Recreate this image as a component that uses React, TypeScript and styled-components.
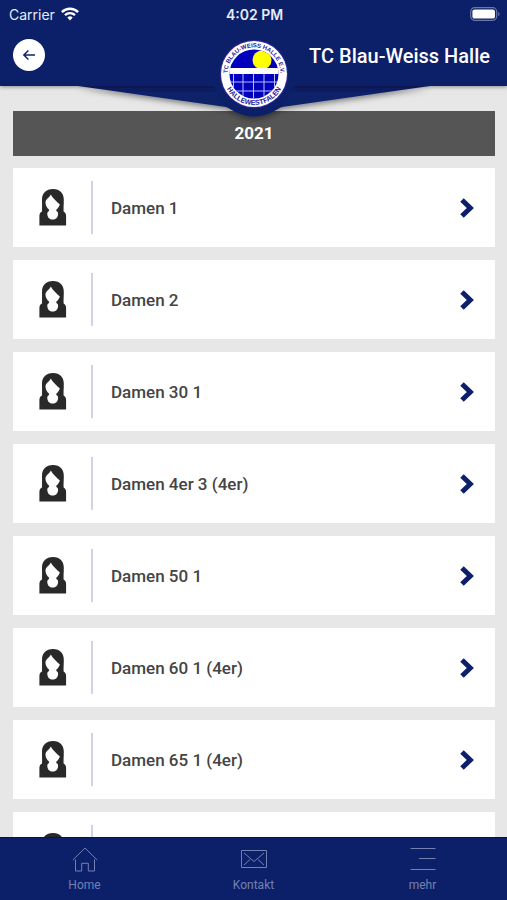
import React from "react";
import styled, { createGlobalStyle } from "styled-components";

const navy = "#0c2069";

const GlobalStyle = createGlobalStyle`
  * { box-sizing: border-box; }
  body { margin: 0; background: #e7e7e7; font-family: Roboto, "Liberation Sans", sans-serif; }
  button { border: 0; padding: 0; font: inherit; cursor: pointer; }
`;

const Screen = styled.div`
  display: flex;
  flex-direction: column;
  height: 100vh;
  overflow: hidden;
`;

const Header = styled.header`
  position: relative;
  z-index: 1;
  flex: none;
  background: ${navy};
  color: #fff;
  box-shadow: 0 1px 4px rgba(0, 0, 0, 0.4);
`;

const StatusBar = styled.div`
  display: grid;
  grid-template-columns: 1fr auto 1fr;
  align-items: center;
  height: 28px;
  padding: 0 7px 0 9px;
  font-family: Inter, sans-serif;
  font-size: 14px;
  color: #e6ebf8;
`;

const Carrier = styled.span`
  display: flex;
  align-items: center;
  gap: 6px;
`;

const Clock = styled.time`
  font-weight: 600;
`;

const BatteryIcon = styled.svg`
  justify-self: end;
`;

const TitleBar = styled.div`
  display: flex;
  align-items: center;
  justify-content: space-between;
  height: 58px;
  padding: 0 17px 4px 13px;
`;

const BackButton = styled.button`
  display: grid;
  place-items: center;
  width: 32px;
  height: 32px;
  border-radius: 50%;
  background: #fff;
  color: ${navy};
`;

const Title = styled.h1`
  margin: 0;
  padding-top: 2px;
  font-size: 20px;
  line-height: 24px;
  font-weight: 500;
`;

const Emblem = styled.svg`
  position: absolute;
  top: 28px;
  left: 50%;
  transform: translateX(-50%);
  pointer-events: none;
`;

const Content = styled.main`
  flex: 1;
  min-height: 0;
  overflow: hidden;
  padding: 25px 12px 0 13px;
`;

const YearHeading = styled.h2`
  margin: 0 0 12px;
  background: #555;
  color: #fff;
  font-size: 17px;
  line-height: 45px;
  font-weight: 700;
  text-align: center;
`;

const TeamList = styled.ul`
  display: flex;
  flex-direction: column;
  gap: 13px;
  margin: 0;
  padding: 0;
  list-style: none;
`;

const TeamButton = styled.button`
  display: flex;
  align-items: center;
  width: 100%;
  height: 79px;
  padding: 0 20px 0 26px;
  border-radius: 1px;
  background: #fff;
  color: #444;
  text-align: left;
`;

const TeamName = styled.span`
  display: flex;
  align-items: center;
  flex: 1;
  height: 53px;
  margin-left: 24px;
  padding-left: 18px;
  border-left: 2px solid #d2d2e6;
  font-size: 17px;
  font-weight: 500;
`;

const TabBar = styled.nav`
  z-index: 1;
  display: grid;
  grid-template-columns: repeat(3, 1fr);
  flex: none;
  height: 63px;
  background: ${navy};
  border-top: 1px solid #07134a;
`;

const Tab = styled.a`
  display: flex;
  flex-direction: column;
  align-items: center;
  gap: 4px;
  padding-top: 7px;
  color: #7480b2;
  font-size: 12px;
  line-height: 16px;
  text-decoration: none;
`;

const WifiIcon = () => (
  <svg width="18" height="14" viewBox="0 0 18 14" fill="none" stroke="#fff" strokeWidth="2.4" aria-hidden="true">
    <path d="M.9 5.1a11.6 11.6 0 0 1 16.2 0M4 8.1a7.2 7.2 0 0 1 10 0" />
    <path d="M6.3 10.6a4 4 0 0 1 5.4 0L9 13.5Z" fill="#fff" stroke="none" />
  </svg>
);

const Battery = () => (
  <BatteryIcon width="30" height="14" viewBox="0 0 30 14" role="img" aria-label="Akku">
    <rect x=".7" y=".7" width="26" height="12.6" rx="4" fill="none" stroke="#6977aa" strokeWidth="1.2" />
    <rect x="2.4" y="2.4" width="22.6" height="9.2" rx="2.2" fill="#fff" />
    <path d="M28.2 4.8v4.4q1.4-.7 1.4-2.2t-1.4-2.2Z" fill="#6977aa" />
  </BatteryIcon>
);

const BackIcon = () => (
  <svg width="14" height="12" viewBox="0 0 14 12" fill="none" stroke="currentColor" strokeWidth="1.4" aria-hidden="true">
    <path d="M13 6H2M6.4 1.4 1.8 6l4.6 4.6" />
  </svg>
);

const WomanIcon = () => (
  <svg width="28" height="40" viewBox="0 0 28 40" aria-hidden="true">
    <path
      d="M14 1C7 1 3 5.500 3 11.500c0 5 .2 8.800 0 12C1.200 24.300.4 25.800.4 28v9.500h26.700V28c0-2.200-.9-3.700-2.500-4.500-.2-3.200.2-7 .2-12C24.800 5.500 21 1 14 1Z"
      fill="#292929"
    />
    <path
      d="M11.800 6.500C10.800 9.500 6.500 11 6.500 14.500c0 3 1.500 5.500 3.600 7.300v1.300c-1.300.5-1.900 1.700-1.800 3.100.3 3.300 2.500 5.300 5.400 5.300s5.100-2 5.400-5.300c.1-1.400-.5-2.600-1.800-3.100v-1.300c1.500-1.300 2.800-3 3.600-5.300C18 14 14 10.500 11.800 6.500Z"
      fill="#fff"
    />
  </svg>
);

const ChevronIcon = () => (
  <svg width="16" height="20" viewBox="0 0 16 20" fill="none" stroke={navy} strokeWidth="5" aria-hidden="true">
    <path d="m3 2 8.300 8L3 18" />
  </svg>
);

const HomeIcon = () => (
  <svg width="26" height="28" viewBox="0 0 26 28" fill="none" stroke="currentColor" strokeWidth="1" aria-hidden="true">
    <path d="M.8 15 13 3l12.200 12M3.500 14.500V26h6.200v-7.700h6.600V26h6.200V14.500" />
  </svg>
);

const MailIcon = () => (
  <svg width="26" height="28" viewBox="0 0 26 28" fill="none" stroke="currentColor" strokeWidth="1" aria-hidden="true">
    <path d="M.5 5.500h25v17H.5ZM3 8l10 8.500L23 8M3 20l6-5.500M23 20l-6-5.500" />
  </svg>
);

const MenuIcon = () => (
  <svg width="26" height="28" viewBox="0 0 26 28" fill="none" stroke="currentColor" strokeWidth="1" aria-hidden="true">
    <path d="M.5 3.500h25M9 13.500h16.500M.5 24.500h25" />
  </svg>
);

const ClubEmblem = () => (
  <Emblem width="400" height="106" viewBox="0 0 400 106" role="img" aria-label="TC Blau-Weiss Halle e.V.">
    <defs>
      <clipPath id="below-header"><rect y="58" width="400" height="48" /></clipPath>
      <clipPath id="court"><circle cx="200" cy="46" r="24.500" /></clipPath>
      <linearGradient id="fold" x1="0" y1="0" x2="0" y2="1">
        <stop offset="0" stopColor="#081750" />
        <stop offset=".2" stopColor={navy} />
      </linearGradient>
      <filter id="shade" x="-10%" y="-30%" width="120%" height="170%">
        <feDropShadow dx="0" dy="2" stdDeviation="3" floodOpacity=".5" />
      </filter>
      <path id="upper-arc" d="M175.650 56.300A26.500 26.500 0 1 1 224.350 56.300" />
      <path id="lower-arc" d="M169 46a31 31 0 0 0 62 0" />
    </defs>
    <g clipPath="url(#below-header)">
      <path
        d="M24 58 172 79C176 80 186 88.500 200 88.500S224 80 228 79L376 58Z"
        fill="url(#fold)"
        filter="url(#shade)"
      />
    </g>
    <circle cx="200" cy="46" r="42" fill={navy} />
    <circle cx="200" cy="46" r="34" fill="#3428a0" />
    <circle cx="200" cy="46" r="33" fill="#fff" />
    <g clipPath="url(#court)">
      <rect x="175" y="21" width="50" height="50" fill="#0000bd" />
      <circle cx="208" cy="32" r="9.500" fill="#ff0" />
      <path d="M175 43h50" stroke="#fff" strokeWidth="6" />
      <path d="M179.500 46v25M189 46v25M199.500 46v25M210 46v25M220.500 46v25M175 54h50M175 63h50" stroke="#b9bdf4" strokeWidth="1" />
    </g>
    <g fill="#25209b" fontFamily="Liberation Sans, sans-serif" fontWeight="700" textAnchor="middle">
      <text fontSize="6"><textPath href="#upper-arc" startOffset="50%">TC BLAU-WEISS HALLE E.V.</textPath></text>
      <text fontSize="7"><textPath href="#lower-arc" startOffset="50%">HALLEWESTFALEN</textPath></text>
    </g>
  </Emblem>
);

const teams = [
  "Damen 1",
  "Damen 2",
  "Damen 30 1",
  "Damen 4er 3 (4er)",
  "Damen 50 1",
  "Damen 60 1 (4er)",
  "Damen 65 1 (4er)",
  "",
];

const tabs = [
  { label: "Home", Icon: HomeIcon },
  { label: "Kontakt", Icon: MailIcon },
  { label: "mehr", Icon: MenuIcon },
];

export default function App() {
  return (
    <Screen>
      <GlobalStyle />
      <Header>
        <StatusBar>
          <Carrier>Carrier <WifiIcon /></Carrier>
          <Clock>4:02 PM</Clock>
          <Battery />
        </StatusBar>
        <TitleBar>
          <BackButton type="button" aria-label="Zurück"><BackIcon /></BackButton>
          <Title>TC Blau-Weiss Halle</Title>
        </TitleBar>
        <ClubEmblem />
      </Header>
      <Content>
        <YearHeading>2021</YearHeading>
        <TeamList>
          {teams.map((team, index) => (
            <li key={index}>
              <TeamButton type="button" aria-label={team || "Mannschaft"}>
                <WomanIcon />
                <TeamName>{team}</TeamName>
                <ChevronIcon />
              </TeamButton>
            </li>
          ))}
        </TeamList>
      </Content>
      <TabBar>
        {tabs.map(({ label, Icon }) => (
          <Tab key={label} href="#">
            <Icon />
            {label}
          </Tab>
        ))}
      </TabBar>
    </Screen>
  );
}
